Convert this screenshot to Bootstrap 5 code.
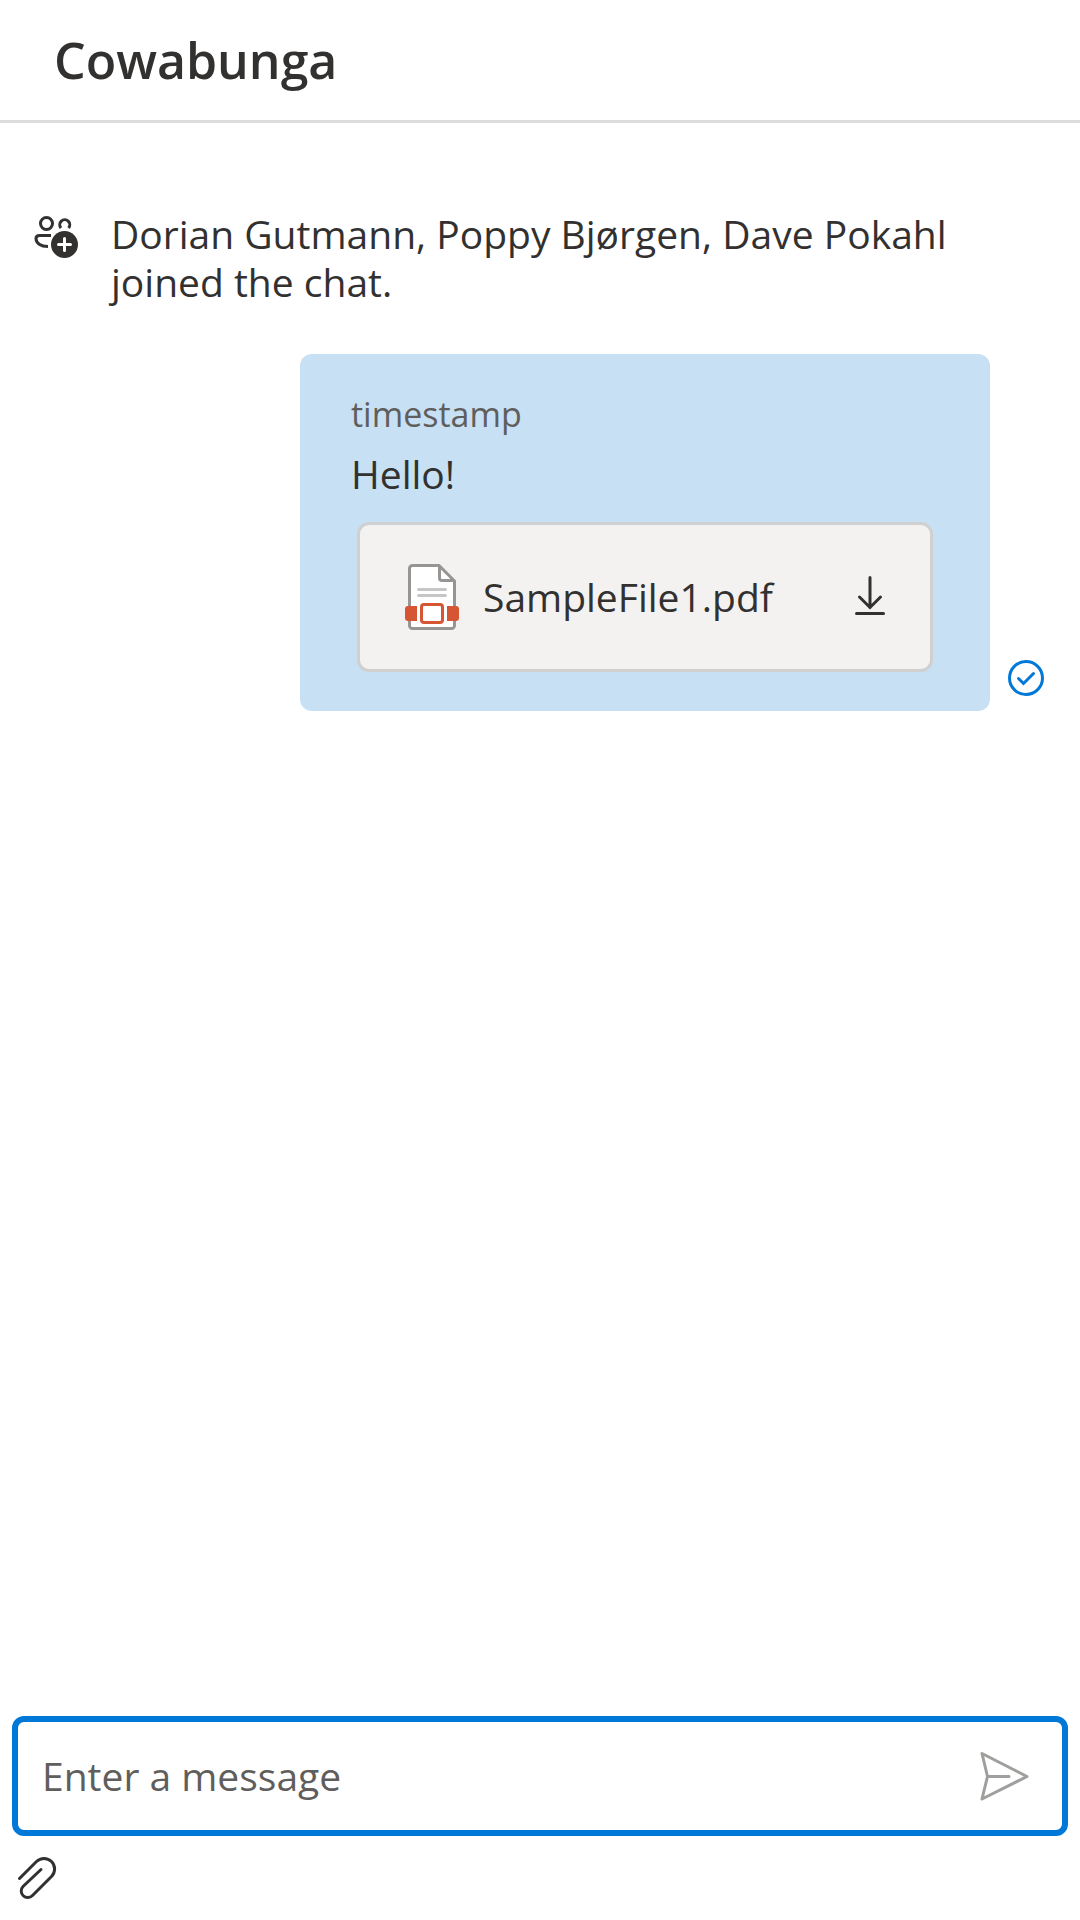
<!DOCTYPE html>
<html lang="en">
<head>
<meta charset="utf-8">
<meta name="viewport" content="width=device-width, initial-scale=1">
<title>Cowabunga</title>
<link href="https://cdn.jsdelivr.net/npm/bootstrap@5.3.0/dist/css/bootstrap.min.css" rel="stylesheet">
<style>
  body { font-family: "Segoe UI", "Open Sans", "Noto Sans", sans-serif; font-size: 39px; line-height: 48px; color: #323130; background: #fff; }
  svg { display: block; flex: none; }
  .chat-header { border-bottom: 3px solid #dcdcdc; padding: 24px 54px; }
  .chat-title { font-size: 50px; font-weight: 600; line-height: 72px; }
  .thread { padding: 87px 36px 24px 33px; }
  .system-note { gap: 32px; margin-bottom: 48px; }
  .system-icon { margin-top: 5px; }
  .own-row { gap: 18px; }
  .bubble { width: 70%; max-width: 690px; background: #c7e0f4; border-radius: 12px; padding: 36px 51px 39px; }
  .bubble-time { font-size: 34px; color: #605e5c; }
  .bubble-text { line-height: 60px; padding: 6px 0 15px; }
  .file-tile { margin: 3px 6px 0; height: 150px; border: 3px solid #d0d0d0; border-radius: 12px; background: #f3f2f1; padding: 0 42px 0 45px; gap: 24px; }
  .seen { margin-bottom: 15px; }
  .composer { padding: 0 12px 18px; }
  .send-box { border: 6px solid #0078d7; border-radius: 12px; height: 120px; padding: 0 32px 0 24px; }
  .send-field { color: #323130; font-size: inherit; line-height: 60px; }
  .send-field:focus { box-shadow: none; }
  .send-field::placeholder { color: #605e5c; opacity: 1; }
  .plain-btn { color: inherit; line-height: 0; }
</style>
<script src="https://cdn.jsdelivr.net/npm/bootstrap@5.3.0/dist/js/bootstrap.bundle.min.js" defer></script>
</head>
<body class="d-flex flex-column min-vh-100">
<header class="chat-header"><h1 class="chat-title m-0">Cowabunga</h1></header>
<main class="thread flex-grow-1">
  <div class="system-note d-flex align-items-start">
    <svg class="system-icon" width="46" height="46" viewBox="0 0 46 46" fill="none" stroke="#323130" stroke-width="3" aria-hidden="true">
      <circle cx="13.500" cy="8.500" r="6"/>
      <path d="M28 13a5 5 0 1 1 7.500 0"/>
      <path d="M18 20.500H6.500C4 20.500 3 22 3 23.500 3 28 7.500 31.500 15 31.500"/>
      <circle cx="31.500" cy="29.500" r="13.500" fill="#323130" stroke="none"/>
      <path d="M31.500 23.500v12M25.500 29.500h12" stroke="#fff" stroke-linecap="round"/>
    </svg>
    <p class="m-0">Dorian Gutmann, Poppy Bjørgen, Dave Pokahl joined the chat.</p>
  </div>
  <div class="own-row d-flex justify-content-end align-items-end">
    <article class="bubble">
      <div class="bubble-time">timestamp</div>
      <div class="bubble-text">Hello!</div>
      <div class="file-tile d-flex align-items-center">
        <svg width="54" height="66" viewBox="0 0 54 66" aria-hidden="true">
          <path d="M7.500 1.500H34L49.500 17V61.500a3 3 0 0 1-3 3H7.500a3 3 0 0 1-3-3V4.500a3 3 0 0 1 3-3z" fill="#fff" stroke="#979593" stroke-width="3"/>
          <path d="M34.500 2V14a2.500 2.500 0 0 0 2.500 2.500H49" fill="none" stroke="#979593" stroke-width="3"/>
          <path d="M13.500 25.500h27M13.500 31.500h27" stroke="#c8c6c4" stroke-width="3" stroke-linecap="round"/>
          <path d="M3 42h9v15H3a3 3 0 0 1-3-3v-9a3 3 0 0 1 3-3zM42 42h9a3 3 0 0 1 3 3v9a3 3 0 0 1-3 3h-9z" fill="#d65532"/>
          <rect x="16.500" y="40.500" width="21" height="18" rx="2.500" fill="#fff" stroke="#d65532" stroke-width="3"/>
        </svg>
        <span class="flex-grow-1">SampleFile1.pdf</span>
        <button class="btn plain-btn p-0 border-0" type="button" aria-label="Download SampleFile1.pdf">
          <svg width="36" height="42" viewBox="0 0 36 42" fill="none" stroke="#323130" stroke-width="3" stroke-linecap="round" aria-hidden="true"><path d="M18 1.500V31.500M7.500 21 18 31.500 28.500 21M4.500 37.500h27"/></svg>
        </button>
      </div>
    </article>
    <svg class="seen" width="36" height="36" viewBox="0 0 36 36" fill="none" stroke="#0078d7" stroke-width="3" stroke-linecap="round" role="img" aria-label="Seen"><circle cx="18" cy="18" r="16.500"/><path d="M10.500 18.500l5 5L25.500 13.500"/></svg>
  </div>
</main>
<footer class="composer">
  <div class="send-box d-flex align-items-center">
    <input class="send-field form-control border-0 bg-transparent p-0" type="text" placeholder="Enter a message" aria-label="Enter a message">
    <button class="btn plain-btn p-0 border-0" type="button" aria-label="Send message">
      <svg width="51" height="51" viewBox="0 0 51 51" fill="none" stroke="#a19f9d" stroke-width="3" stroke-linejoin="round" aria-hidden="true"><path d="M3 2.500 48 25.500 3 48 8.500 25.500zM8.500 25.500H30" stroke-linecap="round"/></svg>
    </button>
  </div>
  <button class="clip-btn btn plain-btn p-0 border-0 mt-3" type="button" aria-label="Attach a file">
    <svg width="50" height="50" viewBox="0 0 50 50" fill="none" stroke="#323130" stroke-width="3" stroke-linecap="round" aria-hidden="true"><path d="M7.500 26.500 24.500 9.500A10.500 10.500 0 0 1 39.500 24.500L20.500 43.500A6.400 6.400 0 0 1 11 34.500L29 17.500"/></svg>
  </button>
</footer>
</body>
</html>
